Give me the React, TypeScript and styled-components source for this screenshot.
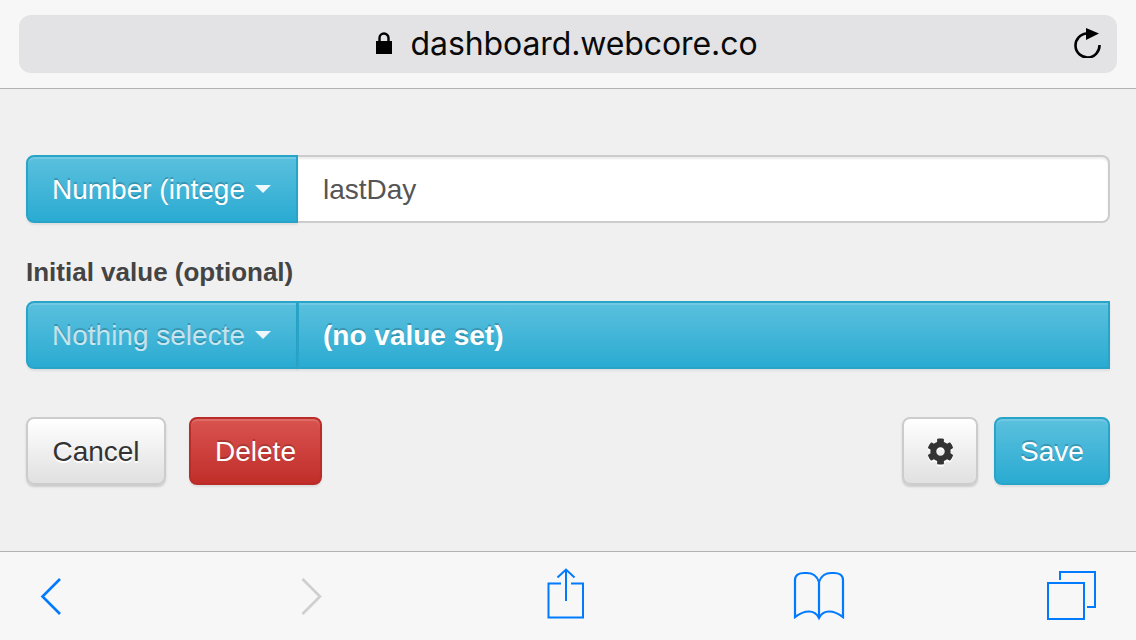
import React from 'react';
import styled, { createGlobalStyle, css } from 'styled-components';
import { FaCog } from 'react-icons/fa';

const GlobalStyle = createGlobalStyle`
  html, body {
    margin: 0;
    padding: 0;
    background: #f0f0f0;
  }
  * {
    box-sizing: border-box;
  }
`;

type Tone = 'info' | 'danger' | 'plain';

const tones = {
  info: css`
    color: #fff;
    background: linear-gradient(to bottom, #5bc0de 0%, #2aabd2 100%);
    border-color: #28a4c9;
    text-shadow: 0 -2px 0 rgba(0, 0, 0, 0.2);
    box-shadow: inset 0 2px 0 rgba(255, 255, 255, 0.15), 0 2px 2px rgba(0, 0, 0, 0.075);
  `,
  danger: css`
    color: #fff;
    background: linear-gradient(to bottom, #d9534f 0%, #c12e2a 100%);
    border-color: #b92c28;
    text-shadow: 0 -2px 0 rgba(0, 0, 0, 0.2);
    box-shadow: inset 0 2px 0 rgba(255, 255, 255, 0.15), 0 2px 2px rgba(0, 0, 0, 0.075);
  `,
  plain: css`
    color: #333;
    background: linear-gradient(to bottom, #fff 0%, #e0e0e0 100%);
    border-color: #ccc;
    text-shadow: 0 2px 0 #fff;
    box-shadow: inset 0 2px 0 rgba(255, 255, 255, 0.15), 0 2px 2px rgba(0, 0, 0, 0.15);
  `,
};

const Page = styled.div`
  width: 1136px;
  height: 640px;
  display: flex;
  flex-direction: column;
  overflow: hidden;
  font-family: 'Liberation Sans', Arial, sans-serif;
  font-size: 28px;
  color: #333;
`;

const TopBar = styled.header`
  flex: none;
  height: 89px;
  padding: 15px 19px 0;
  background: #f7f7f7;
  border-bottom: 1px solid #b2b2b2;
`;

const UrlBar = styled.div`
  height: 58px;
  padding: 0 17px;
  display: grid;
  grid-template-columns: 1fr auto 1fr;
  align-items: center;
  background: #e3e3e5;
  border-radius: 12px;
`;

const UrlText = styled.div`
  grid-column: 2;
  display: flex;
  align-items: center;
  gap: 19px;
  margin: 0 0 2px -3px;
  font-family: Inter, 'Liberation Sans', sans-serif;
  font-size: 32px;
  letter-spacing: -0.1px;
  color: #0a0a0a;
`;

const ReloadSlot = styled.div`
  grid-column: 3;
  display: flex;
  justify-content: flex-end;
  margin: 0 -2px 2px 0;
`;

const Main = styled.main`
  flex: 1;
  padding: 66px 26px 0;
  background: #f0f0f0;
`;

const Group = styled.div`
  display: flex;
  height: 68px;
`;

const FieldLabel = styled.label`
  display: block;
  margin: 33px 0 13px;
  height: 32px;
  line-height: 32px;
  font-size: 26px;
  font-weight: 700;
  color: #444;
`;

const GroupButton = styled.div<{ $muted?: boolean }>`
  ${tones.info}
  flex: none;
  width: 272px;
  display: flex;
  align-items: center;
  padding: 2px 24px 0;
  border-width: 2px;
  border-style: solid;
  border-radius: 8px 0 0 8px;
  ${(p) => p.$muted && 'color: rgba(255, 255, 255, 0.72);'}
`;

const ClippedText = styled.span`
  width: 193px;
  overflow: hidden;
  white-space: nowrap;
`;

const Caret = styled.span`
  margin: -2px 0 0 10px;
  width: 0;
  height: 0;
  border-top: 8px solid #fff;
  border-left: 8px solid transparent;
  border-right: 8px solid transparent;
  opacity: 0.9;
`;

const TextField = styled.div`
  flex: 1;
  display: flex;
  align-items: center;
  padding: 2px 25px 0;
  color: #555;
  background: #fff;
  border: 2px solid #ccc;
  border-left: 0;
  border-radius: 0 8px 8px 0;
  box-shadow: inset 0 2px 2px rgba(0, 0, 0, 0.075);
`;

const ValueField = styled.div`
  ${tones.info}
  flex: 1;
  display: flex;
  align-items: center;
  margin-left: -1px;
  padding: 2px 24px 0;
  font-weight: 700;
  border-width: 2px;
  border-style: solid;
`;

const Actions = styled.div`
  display: flex;
  margin-top: 48px;
`;

const Button = styled.div<{ $tone: Tone; $width: number; $push?: boolean; $gap?: number }>`
  ${(p) => tones[p.$tone]}
  width: ${(p) => p.$width}px;
  height: 68px;
  padding-top: 2px;
  display: flex;
  align-items: center;
  justify-content: center;
  border-width: 2px;
  border-style: solid;
  border-radius: 8px;
  margin-left: ${(p) => (p.$push ? 'auto' : `${p.$gap ?? 0}px`)};
`;

const GearIcon = styled(FaCog)`
  width: 27px;
  height: 27px;
  margin-top: -2px;
  color: #333;
  filter: drop-shadow(0 2px 0 #fff);
`;

const BottomBar = styled.footer`
  flex: none;
  height: 89px;
  display: flex;
  align-items: center;
  padding-left: 23px;
  background: #f7f7f7;
  border-top: 1px solid #b2b2b2;
`;

const ToolIcon = styled.svg<{ $gap?: number; $color?: string; $stroke?: number }>`
  flex: none;
  width: 56px;
  height: 56px;
  margin-left: ${(p) => p.$gap ?? 0}px;
  fill: none;
  stroke: ${(p) => p.$color ?? '#007aff'};
  stroke-width: ${(p) => p.$stroke ?? 2.6};
`;

const App: React.FC = () => {
  return (
    <Page>
      <GlobalStyle />
      <TopBar>
        <UrlBar>
          <UrlText>
            <svg width="16" height="22" viewBox="0 0 16 22">
              <path d="M0 9h16v13H0z" fill="#000" />
              <path d="M3.500 10V6a4.500 4.500 0 0 1 9 0v4" fill="none" stroke="#000" strokeWidth="2.4" />
            </svg>
            dashboard.webcore.co
          </UrlText>
          <ReloadSlot>
            <svg width="28" height="30" viewBox="0 0 28 30">
              <path d="M13 5.500A12 12 0 1 0 25.500 17" fill="none" stroke="#000" strokeWidth="2.6" />
              <path d="M12 0l13 5.500L12 12z" fill="#000" />
            </svg>
          </ReloadSlot>
        </UrlBar>
      </TopBar>
      <Main>
        <Group>
          <GroupButton>
            <ClippedText>Number (intege</ClippedText>
            <Caret />
          </GroupButton>
          <TextField>lastDay</TextField>
        </Group>
        <FieldLabel>Initial value (optional)</FieldLabel>
        <Group>
          <GroupButton $muted>
            <ClippedText>Nothing selecte</ClippedText>
            <Caret />
          </GroupButton>
          <ValueField>(no value set)</ValueField>
        </Group>
        <Actions>
          <Button $tone="plain" $width={140}>Cancel</Button>
          <Button $tone="danger" $width={133} $gap={23}>Delete</Button>
          <Button $tone="plain" $width={76} $push><GearIcon /></Button>
          <Button $tone="info" $width={116} $gap={16}>Save</Button>
        </Actions>
      </Main>
      <BottomBar>
        <ToolIcon viewBox="0 0 56 56">
          <path d="M37 11L19.500 28.500 37 46" />
        </ToolIcon>
        <ToolIcon viewBox="0 0 56 56" $gap={205} $color="#cfcfcf">
          <path d="M18.500 11L36 28.500 18.500 46" />
        </ToolIcon>
        <ToolIcon viewBox="0 0 56 56" $gap={198} $stroke={2}>
          <path d="M23 15.500H10.500V49.500H45V15.500H33" />
          <path d="M19.500 9.500L28 1.500l8.500 8M28 2v31" />
        </ToolIcon>
        <ToolIcon viewBox="0 0 56 56" $gap={197} $stroke={2.2}>
          <path d="M28 14C26 8 21 5 16 5H13C8 5 4 7 4 12V49C8 46 13 43.500 18 43.500C23 43.500 26 46 28 50C30 46 33 43.500 38 43.500C43 43.500 48 46 52 49V12C52 7 48 5 43 5H40C35 5 30 8 28 14ZM28 14V50" />
        </ToolIcon>
        <ToolIcon viewBox="0 0 56 56" $gap={197} $stroke={2}>
          <path d="M16 12V4h35v35h-8" />
          <path d="M4 15h36v36H4z" />
        </ToolIcon>
      </BottomBar>
    </Page>
  );
};

export default App;
